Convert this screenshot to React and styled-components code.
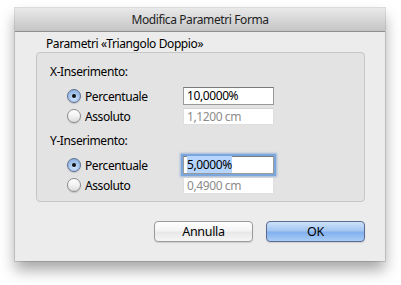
import styled, { createGlobalStyle } from 'styled-components';

const Global = createGlobalStyle`
  html, body {
    margin: 0;
    padding: 0;
    background: #ffffff;
  }
  body {
    font-family: "Noto Sans", "Liberation Sans", sans-serif;
    font-size: 12px;
    letter-spacing: -0.4px;
    color: #000;
  }
`;

const Page = styled.div`
  width: 401px;
  height: 285px;
  padding: 8px 16px 0 15px;
  box-sizing: border-box;
`;

const Window = styled.div`
  width: 370px;
  height: 253px;
  background: #ececec;
  box-shadow: 0 9px 14px rgba(0, 0, 0, 0.35), 0 0 0 1px rgba(0, 0, 0, 0.12);
  display: flex;
  flex-direction: column;
`;

const TitleBar = styled.div`
  height: 24px;
  flex: none;
  display: flex;
  align-items: center;
  justify-content: center;
  background: linear-gradient(#e9e9e9, #d3d3d3 60%, #c4c4c4);
  border-bottom: 1px solid #8f8f8f;
  box-sizing: border-box;
  color: #222;
`;

const Body = styled.div`
  flex: 1;
  padding: 4px 20px 0 21px;
  display: flex;
  flex-direction: column;
`;

const GroupLabel = styled.div`
  height: 16px;
  line-height: 16px;
  padding-left: 10px;
`;

const GroupBox = styled.div`
  height: 150px;
  box-sizing: border-box;
  background: #e3e3e3;
  border: 1px solid #c6c6c6;
  border-radius: 4px;
  padding: 11px 0 0 13px;
  display: flex;
  flex-direction: column;
`;

const SectionTitle = styled.div`
  height: 16px;
  line-height: 16px;
  margin-top: ${p => p.$top || 0}px;
`;

const OptionGrid = styled.div`
  display: grid;
  grid-template-columns: 116px 91px;
  grid-auto-rows: 20px;
  margin: 6px 0 0 17px;
`;

const Option = styled.label`
  display: flex;
  align-items: center;
  gap: 4px;
`;

const Radio = styled.span`
  width: 14px;
  height: 14px;
  border-radius: 50%;
  box-sizing: border-box;
  display: flex;
  align-items: center;
  justify-content: center;
  border: 1px solid ${p => (p.$on ? '#5d6f92' : '#8c8c8c')};
  background: ${p =>
    p.$on
      ? 'radial-gradient(circle at 50% 70%, #cfe3fb, #9cbde6 60%, #7fa3d2)'
      : 'linear-gradient(#ffffff, #f2f2f2 50%, #dcdcdc)'};
  box-shadow: 0 1px 1px rgba(0, 0, 0, 0.15);

  &::after {
    content: '';
    width: 4px;
    height: 4px;
    border-radius: 50%;
    background: #111;
    display: ${p => (p.$on ? 'block' : 'none')};
  }
`;

const Field = styled.div`
  height: ${p => (p.$disabled ? 17 : 18)}px;
  align-self: center;
  box-sizing: border-box;
  background: #fff;
  border: 1px solid ${p => (p.$disabled ? '#dedede' : '#9a9a9a')};
  border-top-color: ${p => (p.$disabled ? '#d4d4d4' : '#7a7a7a')};
  padding: 0 3px;
  line-height: ${p => (p.$disabled ? 15 : 16)}px;
  color: ${p => (p.$disabled ? '#8c8c8c' : '#000')};
  box-shadow: ${p => (p.$focus ? '0 0 0 2px #7aa6dc, 0 0 2px 3px rgba(90,140,210,0.5)' : 'none')};
`;

const Selected = styled.span`
  background: #b5d5ff;
`;

const Actions = styled.div`
  display: flex;
  justify-content: flex-end;
  gap: 13px;
  margin-top: 19px;
`;

const Button = styled.button`
  width: 99px;
  height: 21px;
  border-radius: 4px;
  font: inherit;
  font-size: 12.5px;
  letter-spacing: -0.3px;
  color: #000;
  padding: 0;
  border: 1px solid ${p => (p.$primary ? '#5a6b91' : '#9a9a9a')};
  background: ${p =>
    p.$primary
      ? 'linear-gradient(#cde2fb, #a3c6f2 45%, #83b0ee 55%, #a9cdf8)'
      : 'linear-gradient(#ffffff, #f4f4f4 45%, #e8e8e8 55%, #f6f6f6)'};
  box-shadow: 0 1px 1px rgba(0, 0, 0, 0.12);
`;

const Row = ({ label, on, value, disabled, focus }) => (
  <>
    <Option>
      <Radio $on={on} />
      {label}
    </Option>
    <Field $disabled={disabled} $focus={focus}>
      {value}
    </Field>
  </>
);

export default function App() {
  return (
    <Page>
      <Global />
      <Window>
        <TitleBar>Modifica Parametri Forma</TitleBar>
        <Body>
          <GroupLabel>Parametri «Triangolo Doppio»</GroupLabel>
          <GroupBox>
            <SectionTitle>X-Inserimento:</SectionTitle>
            <OptionGrid>
              <Row label="Percentuale" on value="10,0000%" />
              <Row label="Assoluto" value="1,1200 cm" disabled />
            </OptionGrid>
            <SectionTitle $top={7}>Y-Inserimento:</SectionTitle>
            <OptionGrid>
              <Row label="Percentuale" on focus value={<Selected>5,0000%</Selected>} />
              <Row label="Assoluto" value="0,4900 cm" disabled />
            </OptionGrid>
          </GroupBox>
          <Actions>
            <Button>Annulla</Button>
            <Button $primary>OK</Button>
          </Actions>
        </Body>
      </Window>
    </Page>
  );
}
